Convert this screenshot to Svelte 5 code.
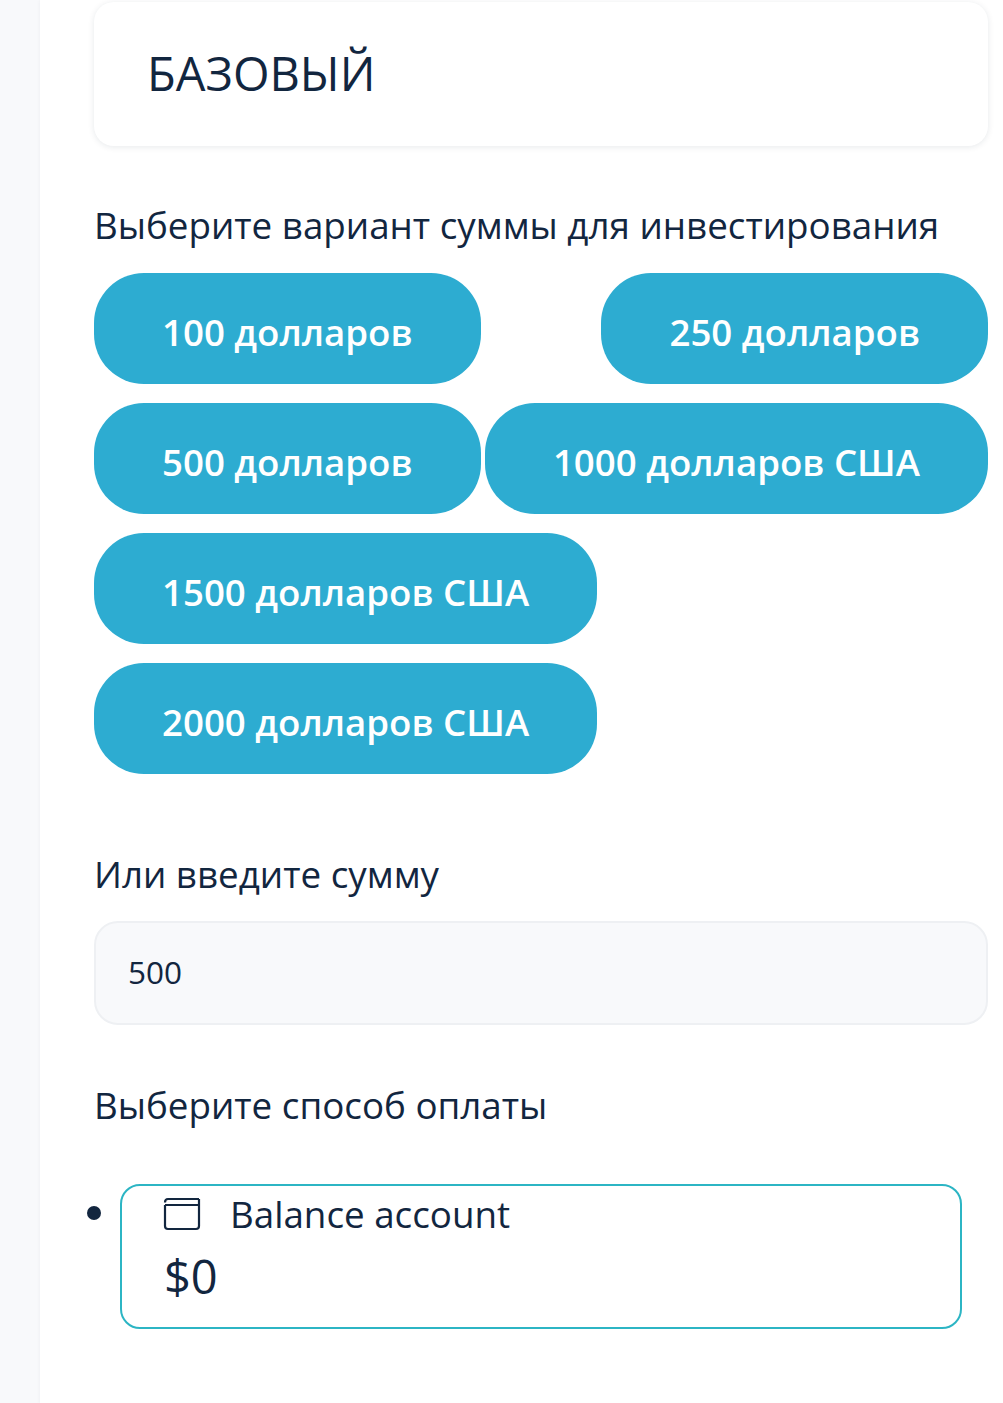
<script>
const amounts = ["100 долларов", "250 долларов", "500 долларов", "1000 долларов США", "1500 долларов США", "2000 долларов США"];
let sum = $state("500");
</script>

<div class="page">
  <main class="content">
    <div class="plan-card">
      <h1>БАЗОВЫЙ</h1>
    </div>

    <p class="label first">Выберите вариант суммы для инвестирования</p>
    <div class="amounts">
      {#each amounts as a}
        <button class="amount" onclick={() => (sum = a.replace(/\D/g, ""))}>{a}</button>
      {/each}
    </div>

    <p class="label second">Или введите сумму</p>
    <input class="sum" bind:value={sum} />

    <p class="label third">Выберите способ оплаты</p>
    <ul class="methods">
      <li>
        <span class="dot"></span>
        <div class="method">
          <div class="method-head">
            <svg width="38" height="34" viewBox="0 0 38 34" fill="none" stroke="#12263f" stroke-width="2.2">
              <path d="M2 5.5 Q2 2 5 2 H36 M2 8 V29 Q2 32 5 32 H33 Q36 32 36 29 V2 M2 8 H36" />
            </svg>
            <span>Balance account</span>
          </div>
          <div class="balance">$0</div>
        </div>
      </li>
    </ul>
  </main>
</div>

<style>
:global(body) {
  background: #fff;
  font-family: "Open Sans", "Liberation Sans", sans-serif;
  color: #12263f;
}
.page {
  height: 1403px;
  overflow: hidden;
  background: #f8f9fb;
  padding-left: 40px;
}
.content {
  height: 100%;
  background: #fff;
  padding: 2px 15px 0 54px;
  box-shadow: 0 0 4px rgba(18, 38, 63, 0.05);
}
.plan-card {
  height: 144px;
  box-sizing: border-box;
  padding: 40px 53px 0;
  border-radius: 20px;
  background: #fff;
  box-shadow: 0 1px 6px rgba(18, 38, 63, 0.1);
}
h1 {
  margin: 0;
  font-size: 47px;
  line-height: 62px;
  font-weight: 400;
}
.label {
  margin: 0;
  font-size: 36.75px;
  line-height: 48px;
}
.first { margin-top: 55px; }
.second { margin-top: 76.4px; }
.third { margin-top: 56px; }
.amounts {
  display: flex;
  flex-wrap: wrap;
  justify-content: space-between;
  row-gap: 19.5px;
  margin-top: 24px;
}
.amount {
  height: 110.5px;
  padding: 7px 68px 0;
  border: 0;
  border-radius: 50px;
  background: #2dacd1;
  color: #fff;
  font-family: inherit;
  font-size: 36.65px;
  font-weight: 600;
  white-space: nowrap;
}
.sum {
  display: block;
  width: 100%;
  box-sizing: border-box;
  height: 104px;
  margin-top: 23px;
  padding: 0 32px 2px;
  border: 2px solid #eef0f3;
  border-radius: 24px;
  background: #f8f9fb;
  color: #12263f;
  font-family: inherit;
  font-size: 31.5px;
}
.methods {
  margin: 55px 26px 0 0;
  padding: 0;
  list-style: none;
}
.methods li {
  display: flex;
  align-items: flex-start;
}
.dot {
  flex: none;
  width: 14px;
  height: 14px;
  margin: 22px 19px 0 -7px;
  border-radius: 50%;
  background: #12263f;
}
.method {
  flex: 1;
  height: 145px;
  box-sizing: border-box;
  padding: 4px 41px 0;
  border: 2px solid #2cb5c4;
  border-radius: 20px;
}
.method-head {
  display: flex;
  align-items: center;
  gap: 29px;
  font-size: 36.75px;
  line-height: 48px;
}
.balance {
  margin: 7px 0 0 1px;
  font-size: 47px;
  line-height: 62px;
}
</style>
